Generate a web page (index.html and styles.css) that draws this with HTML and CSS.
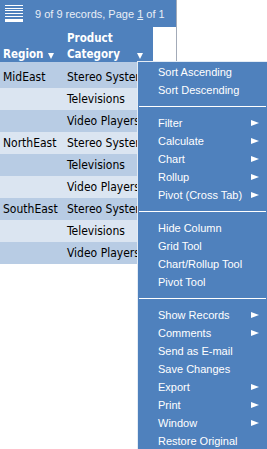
FILE: index.html
```html
<!DOCTYPE html>
<html lang="en">
<head>
  <meta charset="UTF-8" />
  <title>Sales Report</title>
  <link rel="stylesheet" href="styles.css">
</head>
<body>
  <div class="report">
    <div class="toolbar">
      <svg class="grid-icon" width="19" height="18" viewBox="0 0 19 18">
        <rect x="0" y="0" width="18" height="1" fill="#fff"/>
        <rect x="0" y="3" width="18" height="1" fill="#fff"/>
        <rect x="0" y="5" width="18" height="1" fill="#fff"/>
        <rect x="0" y="8" width="18" height="1" fill="#fff"/>
        <rect x="0" y="11" width="18" height="1" fill="#fff"/>
        <rect x="0" y="14" width="18" height="3" fill="#fff"/>
      </svg>
      <span class="summary">9 of 9 records, Page <u>1</u> of 1</span>
    </div>

    <table class="grid">
      <colgroup>
        <col class="col-region">
        <col class="col-product">
      </colgroup>
      <thead>
        <tr>
          <th><div class="head-cell"><span>Region</span><span class="sort-arrow"></span></div></th>
          <th><div class="head-cell"><span>Product<br>Category</span><span class="sort-arrow"></span></div></th>
        </tr>
      </thead>
      <tbody>
        <tr class="odd"><td>MidEast</td><td>Stereo Systems</td></tr>
        <tr class="even"><td></td><td>Televisions</td></tr>
        <tr class="odd"><td></td><td>Video Players</td></tr>
        <tr class="even"><td>NorthEast</td><td>Stereo Systems</td></tr>
        <tr class="odd"><td></td><td>Televisions</td></tr>
        <tr class="even"><td></td><td>Video Players</td></tr>
        <tr class="odd"><td>SouthEast</td><td>Stereo Systems</td></tr>
        <tr class="even"><td></td><td>Televisions</td></tr>
        <tr class="odd"><td></td><td>Video Players</td></tr>
      </tbody>
    </table>
  </div>

  <!-- column context menu -->
  <ul class="menu">
    <li>Sort Ascending</li>
    <li>Sort Descending</li>
    <li class="sep"></li>
    <li class="sub">Filter</li>
    <li class="sub">Calculate</li>
    <li class="sub">Chart</li>
    <li class="sub">Rollup</li>
    <li class="sub">Pivot (Cross Tab)</li>
    <li class="sep"></li>
    <li>Hide Column</li>
    <li>Grid Tool</li>
    <li>Chart/Rollup Tool</li>
    <li>Pivot Tool</li>
    <li class="sep"></li>
    <li class="sub">Show Records</li>
    <li class="sub">Comments</li>
    <li>Send as E-mail</li>
    <li>Save Changes</li>
    <li class="sub">Export</li>
    <li class="sub">Print</li>
    <li class="sub">Window</li>
    <li>Restore Original</li>
  </ul>
</body>
</html>
```

FILE: styles.css
```css
body {
  margin: 0;
  padding: 0;
  background: #ffffff;
  font-family: "Liberation Sans", Arial, sans-serif;
}

.report {
  width: 176px;
  border-right: 1px solid #a3abb8;
  min-height: 449px;
  box-sizing: content-box;
}

.toolbar {
  height: 27px;
  background: #4f81bd;
  display: flex;
  align-items: center;
}

.grid-icon {
  display: block;
  margin: 0 0 0 5px;
}

.summary {
  margin-left: 11px;
  font-size: 11px;
  color: #e9eef6;
  white-space: nowrap;
}

.grid {
  width: 153px;
  table-layout: fixed;
  border-collapse: collapse;
  border-spacing: 0;
  font-family: "DejaVu Sans Condensed", "DejaVu Sans", sans-serif;
  font-stretch: condensed;
}

.col-region {
  width: 64px;
}

.col-product {
  width: 89px;
}

.grid th {
  background: #4f81bd;
  color: #ffffff;
  font-size: 11.5px;
  font-weight: bold;
  text-align: left;
  vertical-align: bottom;
  height: 35px;
  padding: 0 10px 0 3px;
  line-height: 16px;
}

.head-cell {
  display: flex;
  justify-content: space-between;
  align-items: flex-end;
}

.sort-arrow {
  width: 0;
  height: 0;
  border-left: 3.5px solid transparent;
  border-right: 3.5px solid transparent;
  border-top: 6px solid #ffffff;
  margin-bottom: 3px;
}

.grid td {
  height: 22px;
  padding: 0 0 0 3px;
  font-size: 12px;
  color: #000000;
  white-space: nowrap;
  overflow: hidden;
}

.grid tbody tr:first-child td {
  height: 22px;
  padding-top: 4px;
}

.odd {
  background: #b8cce4;
}

.even {
  background: #dbe5f1;
}

.menu {
  position: absolute;
  left: 137px;
  top: 61px;
  width: 129px;
  height: 387px;
  margin: 0;
  padding: 1px 0 0 0;
  list-style: none;
  background: #4f81bd;
  border-top: 1px solid #e4ecf5;
  border-left: 1px solid #e4ecf5;
  overflow: hidden;
}

.menu li {
  height: 18px;
  line-height: 18px;
  padding: 0 8px 0 20px;
  font-size: 11px;
  color: #ffffff;
  display: flex;
  justify-content: space-between;
  align-items: center;
  white-space: nowrap;
}

.menu li.sub::after {
  content: "";
  width: 0;
  height: 0;
  border-top: 3.5px solid transparent;
  border-bottom: 3.5px solid transparent;
  border-left: 8px solid #ffffff;
}

.menu li.sep {
  height: 1px;
  padding: 0;
  margin: 7px 1px 7px 1px;
  background: #ffffff;
}
```
